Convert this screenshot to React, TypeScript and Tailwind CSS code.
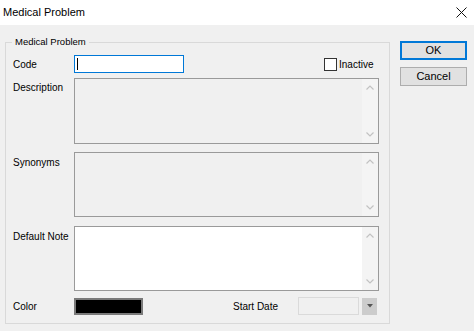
import type { ReactNode } from 'react'

const font = { fontFamily: '"Liberation Sans", Arial, sans-serif' }

function ScrollArrows() {
  return (
    <div className="flex h-full w-[16px] flex-col items-center justify-between bg-[#f4f4f4] py-[6px]">
      <svg width="8" height="5" viewBox="0 0 8 5">
        <path d="M0.5 4.5 L4 1 L7.5 4.5" fill="none" stroke="#c2c2c2" strokeWidth="1.2" />
      </svg>
      <svg width="8" height="5" viewBox="0 0 8 5">
        <path d="M0.5 0.5 L4 4 L7.5 0.5" fill="none" stroke="#c2c2c2" strokeWidth="1.2" />
      </svg>
    </div>
  )
}

function MemoRow({ label, white, height, top, labelPad }: { label: string; white?: boolean; height: string; top: string; labelPad: string }) {
  return (
    <div className={`flex ${top}`}>
      <div className={`w-[61px] ${labelPad} text-[10px] leading-[12px]`}>{label}</div>
      <div className={`flex w-[305px] ${height} justify-end border border-[#9a9a9a] ${white ? 'bg-white' : 'bg-[#f0f0f0]'}`}>
        <ScrollArrows />
      </div>
    </div>
  )
}

function Button({ children, primary }: { children: ReactNode; primary?: boolean }) {
  return (
    <div
      className={`flex h-[19px] w-[67px] items-center justify-center bg-[#e1e1e1] text-[11px] ${
        primary ? 'border-2 border-[#0078d7]' : 'border border-[#adadad]'
      }`}
    >
      {children}
    </div>
  )
}

export default function App() {
  return (
    <div className="h-[331px] w-[474px] overflow-hidden bg-[#f0f0f0] text-black" style={font}>
      <div className="flex h-[25px] items-center justify-between bg-white pl-[3px] pr-[7px]">
        <span className="text-[11px]">Medical Problem</span>
        <svg width="11" height="11" viewBox="0 0 11 11">
          <path d="M0.5 0.5 L10.5 10.5 M10.5 0.5 L0.5 10.5" stroke="#111" strokeWidth="1" />
        </svg>
      </div>

      <div className="flex">
        <div className="relative ml-[5px] mt-[17px] w-[385px] border border-[#d9d9d9] pb-[8px] pl-[7px] pt-[12px]">
          <span className="absolute left-[6px] top-[-7px] bg-[#f0f0f0] px-[3px] text-[9.5px] leading-[12px]">
            Medical Problem
          </span>

          <div className="flex h-[18px] items-center">
            <div className="w-[61px] text-[10px]">Code</div>
            <div className="flex h-[18px] w-[110px] items-center border border-[#0078d7] bg-white pl-[2px]">
              <div className="h-[12px] w-px bg-black" />
            </div>
            <label className="ml-[140px] flex items-center gap-[2px] text-[10px]">
              <span className="h-[13px] w-[13px] border border-[#333] bg-white" />
              Inactive
            </label>
          </div>

          <MemoRow label="Description" height="h-[66px]" top="mt-[5px]" labelPad="pt-[4px]" />
          <MemoRow label="Synonyms" height="h-[65px]" top="mt-[8px]" labelPad="pt-[5px]" />
          <MemoRow label="Default Note" white height="h-[65px]" top="mt-[9px]" labelPad="pt-[5px]" />

          <div className="mt-[6px] flex h-[18px] items-center">
            <div className="w-[61px] text-[10px]">Color</div>
            <div className="h-[17px] w-[69px] border-2 border-[#7a7a7a] bg-black" />
            <div className="ml-[90px] w-[65px] text-[10px]">Start Date</div>
            <div className="h-[18px] w-[61px] border border-[#dadada] bg-[#f0f0f0]" />
            <div className="ml-[3px] flex h-[17px] w-[15px] items-center justify-center bg-[#cccccc]">
              <svg width="6" height="4" viewBox="0 0 6 4">
                <path d="M0 0 L6 0 L3 3.5 Z" fill="#555" />
              </svg>
            </div>
          </div>
        </div>

        <div className="ml-[10px] mt-[16px] flex flex-col gap-[7px]">
          <Button primary>OK</Button>
          <Button>Cancel</Button>
        </div>
      </div>
    </div>
  )
}
